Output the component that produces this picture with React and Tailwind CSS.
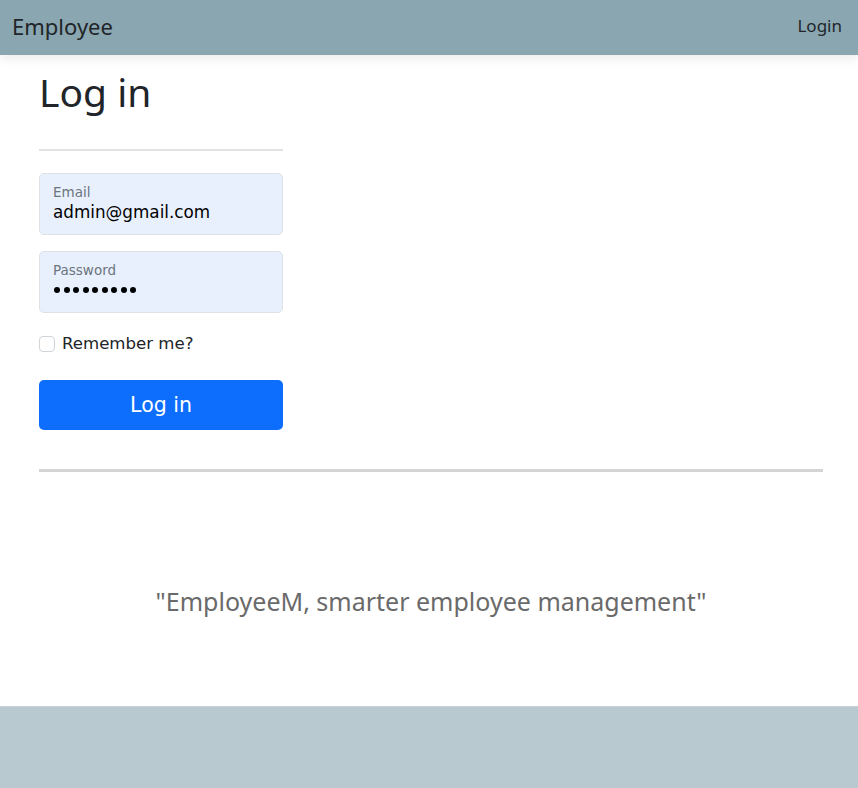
export default function App() {
  const dots = Array.from({ length: 9 });
  return (
    <div className="min-h-[788px] flex flex-col bg-white" style={{ fontFamily: '"Noto Sans", "Open Sans", sans-serif' }}>
      <nav className="h-[55px] bg-[#8aa7b1] flex items-center justify-between pl-3 pr-4 shadow-[0_4px_10px_rgba(0,0,0,0.08)]">
        <span className="text-[22px] leading-[30px] -mt-[4px] text-[#212529]">Employee</span>
        <span className="text-[17px] leading-[24px] -mt-[3px] text-[#212529]">Login</span>
      </nav>

      <main className="flex-1 ml-[39px] mr-[35px]">
        <div className="w-[244px]">
          <h1 className="mt-[14px] text-[39px] leading-[46px] text-[#212529]">Log in</h1>
          <hr className="mt-[34px] border-0 h-[2px] bg-[#e3e3e3]" />
          <div className="mt-[22px] h-[62px] rounded-[5px] border border-[#dee2e6] bg-[#e8f0fe] px-[13px] pt-[9px]" style={{ fontFamily: '"DejaVu Sans", sans-serif' }}>
            <div className="text-[13.5px] leading-[18px] text-[#6c757d]">Email</div>
            <div className="text-[16.8px] leading-[22px] text-black">admin@gmail.com</div>
          </div>
          <div className="mt-[16px] h-[62px] rounded-[5px] border border-[#dee2e6] bg-[#e8f0fe] px-[13px] pt-[9px]" style={{ fontFamily: '"DejaVu Sans", sans-serif' }}>
            <div className="text-[13.5px] leading-[18px] text-[#6c757d]">Password</div>
            <div className="mt-[8px] flex gap-[3.5px] pl-[1px]">
              {dots.map((_, i) => (
                <span key={i} className="w-[6px] h-[6px] rounded-full bg-black" />
              ))}
            </div>
          </div>
          <label className="mt-[20px] flex items-center gap-[7px] text-[16.6px] leading-[22px] text-[#212529]" style={{ fontFamily: '"DejaVu Sans", sans-serif' }}>
            <span className="w-[16px] h-[16px] rounded-[4px] border border-[#cfd4d9] bg-white" />
            Remember me?
          </label>
          <button className="mt-[25px] w-full h-[50px] rounded-[5px] bg-[#0d6efd] text-white text-[20.5px]" style={{ fontFamily: '"DejaVu Sans", sans-serif' }}>
            Log in
          </button>
        </div>
        <hr className="mt-[39px] border-0 h-[3px] bg-[#d4d4d4]" />
        <p className="mt-[112px] text-center text-[25px] leading-[34px] text-[#6a6a6a]">"EmployeeM, smarter employee management"</p>
      </main>

      <footer className="h-[82px] bg-[#b8cad0] border-t border-[#c5d3d8]" />
    </div>
  );
}
